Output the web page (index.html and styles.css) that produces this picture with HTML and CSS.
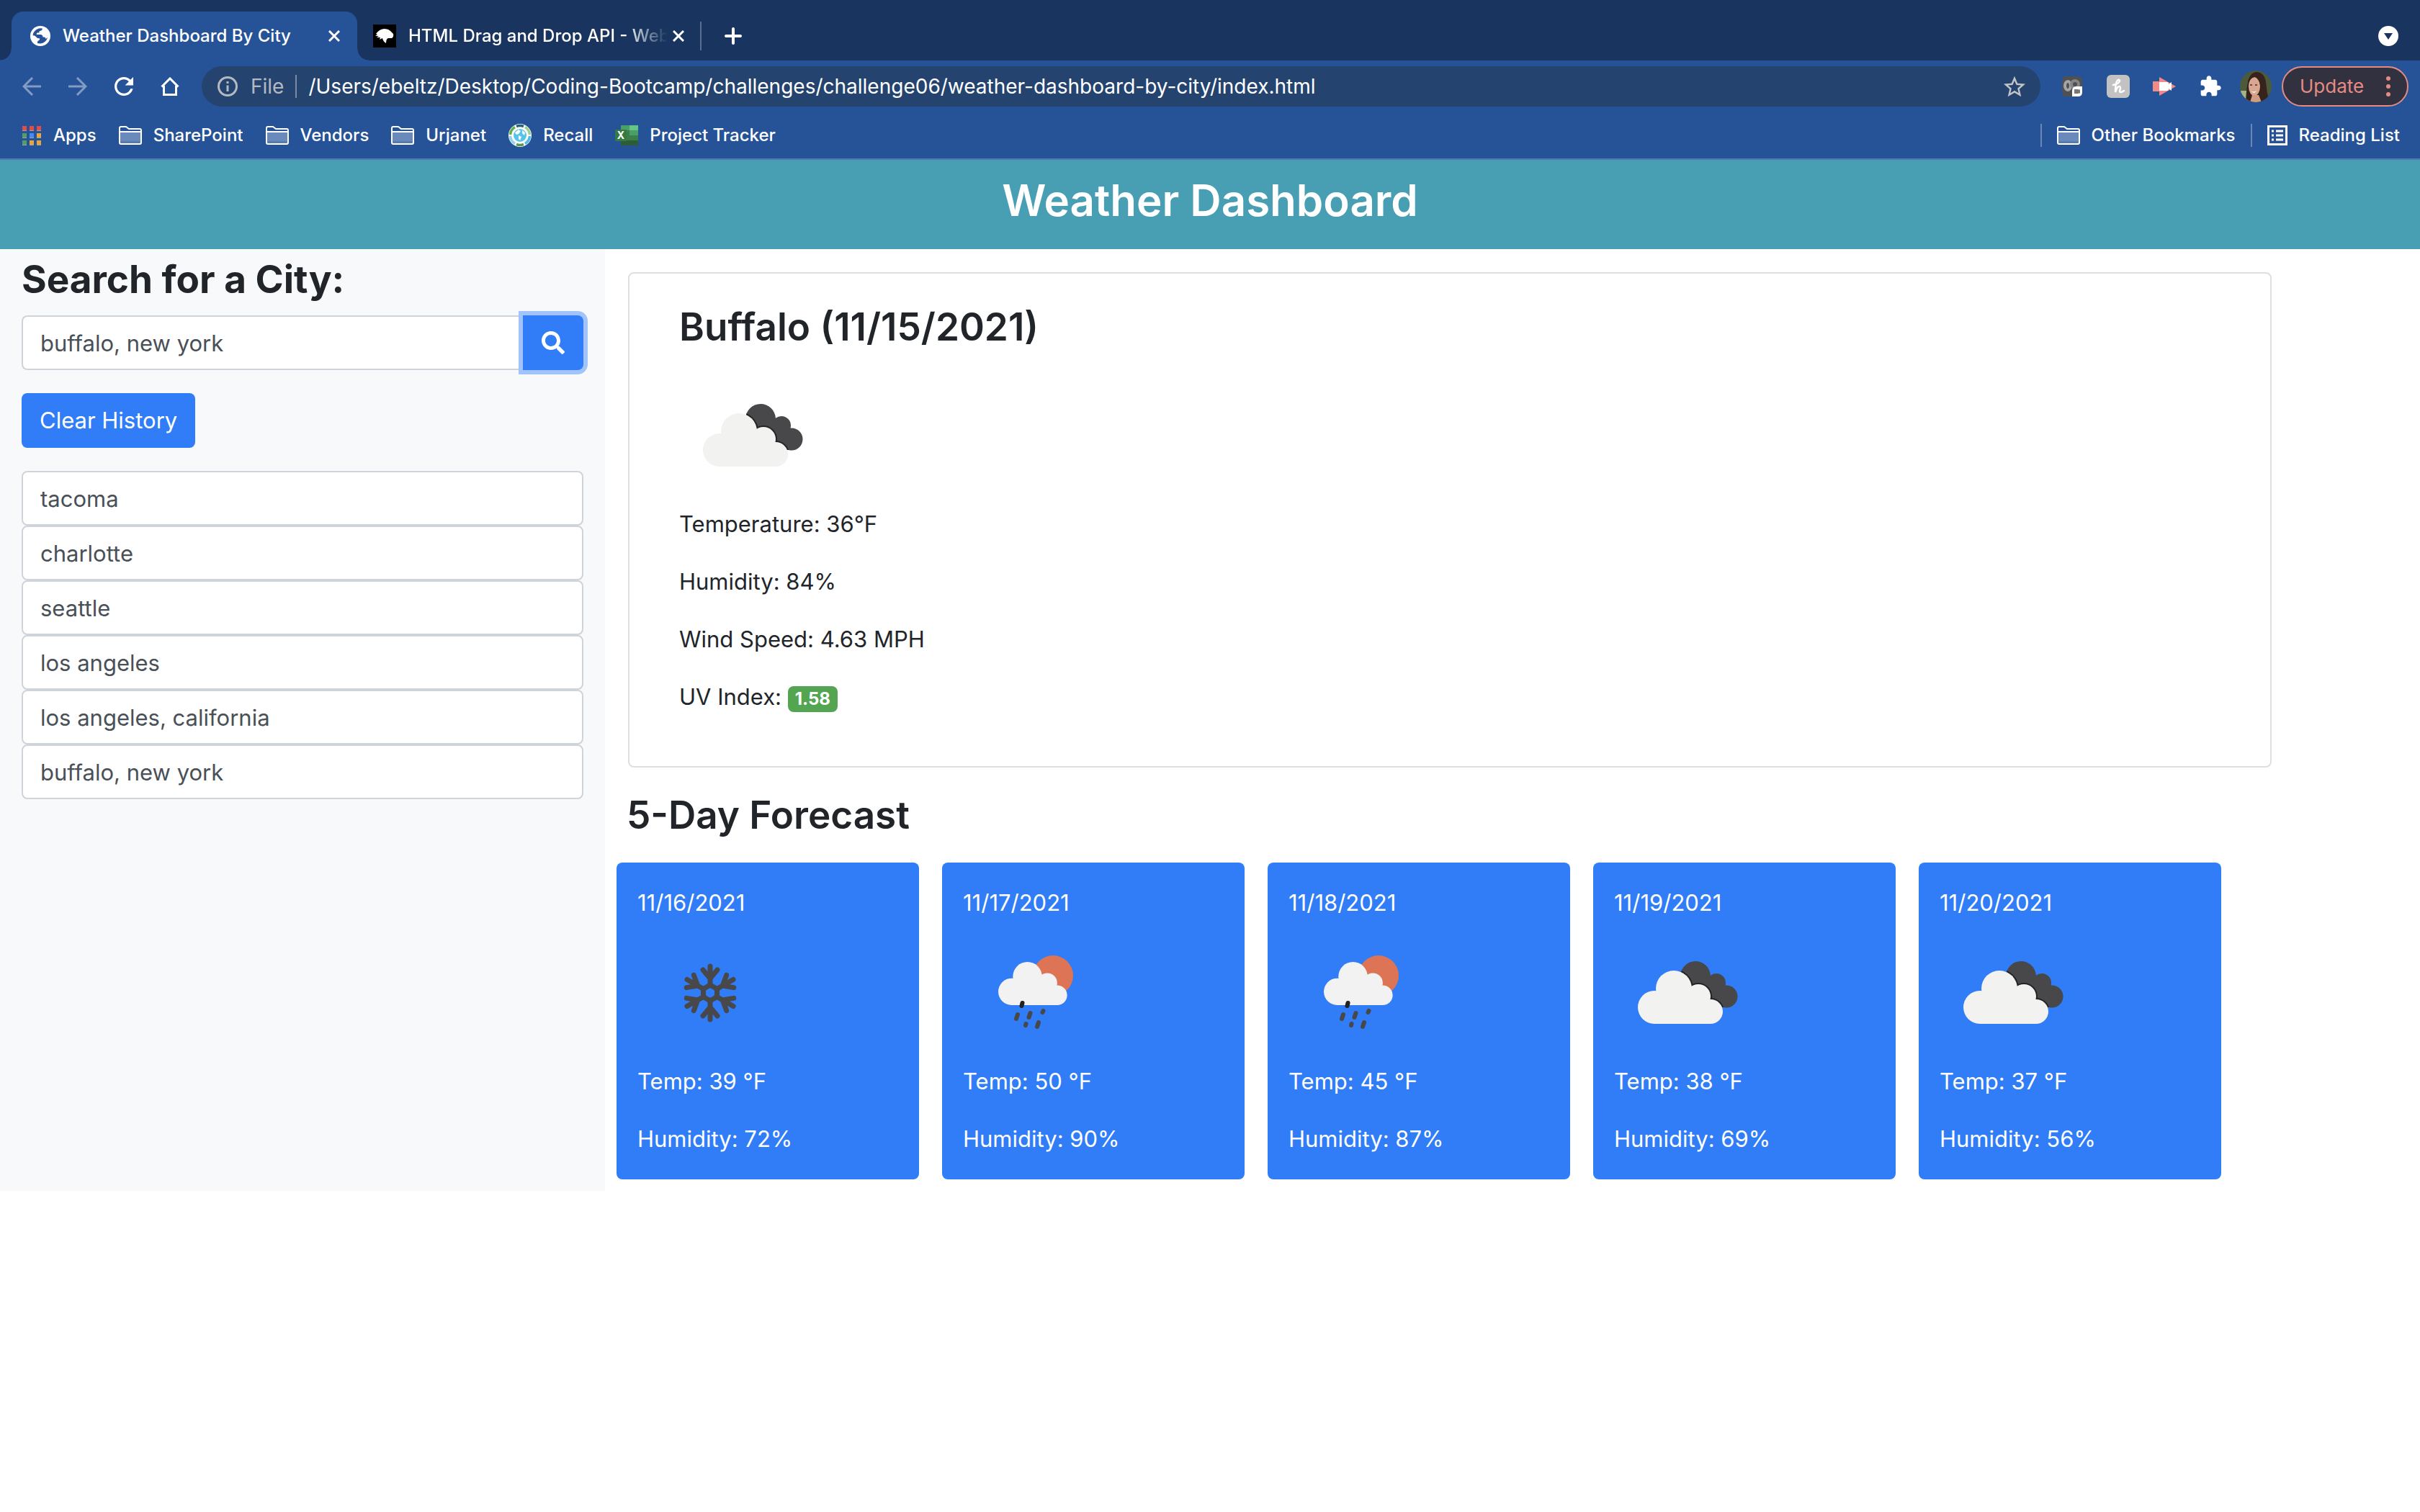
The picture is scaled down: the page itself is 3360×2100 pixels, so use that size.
FILE: index.html
```html
<!DOCTYPE html>
<html lang="en">
<head>
<meta charset="utf-8">
<title>Weather Dashboard By City</title>
<link rel="stylesheet" href="styles.css">
</head>
<body>
<svg class="defs" aria-hidden="true">
  <defs>
    <g id="cloud-shape">
      <circle cx="84" cy="95" r="25"/><circle cx="57" cy="121" r="23"/><circle cx="118" cy="106" r="17"/><circle cx="135" cy="127" r="17"/>
      <path d="M57 144V105L84 95L118 106L135 127V144Z"/>
    </g>
    <clipPath id="back-clip">
      <circle cx="114" cy="78" r="21"/><circle cx="143" cy="87" r="13"/><circle cx="157" cy="106" r="15.500"/>
      <path d="M96 90L114 78L143 80L157 95L160 121H110Z"/>
    </clipPath>
    <symbol id="clouds" viewBox="1 0 200 200">
      <g clip-path="url(#back-clip)">
        <rect width="200" height="200" fill="#48484a"/>
        <use href="#cloud-shape" fill="#242425" stroke="#242425" stroke-width="4"/>
      </g>
      <use href="#cloud-shape" fill="#f2f2f1"/>
    </symbol>
    <symbol id="sun-rain" viewBox="1 -1 200 200">
      <circle cx="126" cy="76" r="28" fill="#dc7455"/>
      <use href="#cloud-shape" fill="#f2f2f2" transform="translate(22.500 .3) scale(.81)"/>
      <g stroke="#48484a" stroke-width="6" stroke-linecap="round">
        <path d="M83.500 114l-1 4" stroke="#222"/><path d="M77 130l-2 6M94.500 128l-2 6M112.500 125l-1 2M88.500 143l-.5 2M106 141l-2 6"/>
      </g>
    </symbol>
    <g id="flake-arm"><path d="M0-10V-37M-10-32L0-20L10-32"/></g>
    <symbol id="snow" viewBox="1 -1 200 200">
      <g transform="translate(102 100)" fill="none" stroke="#48484a" stroke-width="7" stroke-linecap="round" stroke-linejoin="round">
        <path d="M0-11L9.500-5.500V5.500L0 11L-9.500 5.500V-5.500Z"/>
        <use href="#flake-arm"/><use href="#flake-arm" transform="rotate(60)"/><use href="#flake-arm" transform="rotate(120)"/>
        <use href="#flake-arm" transform="rotate(180)"/><use href="#flake-arm" transform="rotate(240)"/><use href="#flake-arm" transform="rotate(300)"/>
      </g>
    </symbol>
    <symbol id="folder" viewBox="0 0 32 26">
      <path d="M2 9H30V24H2Z" fill="#6a8abb"/><path d="M2 21H30V24H2Z" fill="#587aae"/>
      <path d="M1 3Q1 1 3 1H10L14 4H29Q31 4 31 6V23Q31 25 29 25H3Q1 25 1 23ZM1 8H31" fill="none" stroke="#fff" stroke-width="2"/>
    </symbol>
    <symbol id="cross" viewBox="0 0 16 16"><path d="M1 1L15 15M15 1L1 15" stroke="#fff" stroke-width="3"/></symbol>
  </defs>
</svg>

<div class="browser">
  <div class="tab-strip">
    <div class="tab tab-active">
      <svg class="icon-28" viewBox="0 0 28 28"><circle cx="14" cy="14" r="14" fill="#fff"/><path d="M3.500 13Q4.500 6 12 3.500Q17 3 17 4Q16 7 13 7Q12 8 12.500 9.500H9.500L8.500 12H14Q17.500 12 17.500 15.500H19.500Q21.500 15.500 21.500 18L24 16Q23 21 18 23.500Q14 25 10 24Q9.500 21 12 20Q14 19 12.500 17Q10 18 8.500 15.500Q7 13 3.500 13Z" fill="#265397"/></svg>
      <span class="tab-title">Weather Dashboard By City</span>
      <button class="plain" type="button" aria-label="Close tab"><svg class="icon-16"><use href="#cross"/></svg></button>
    </div>
    <div class="tab tab-idle">
      <svg class="icon-32" viewBox="0 0 32 32"><path d="M0 0H32V32H0Z" fill="#000"/><path d="M4 13Q8 7 15 6Q21 6 24 9L28 13Q29 17 26 19L21 19Q18 20 18 26Q14 24 13 19L9 21L10 18L5 18L8 16L3 16L6 14L4 13Z" fill="#fff"/></svg>
      <span class="tab-title tab-fade">HTML Drag and Drop API - Web</span>
      <button class="plain" type="button" aria-label="Close tab"><svg class="icon-16"><use href="#cross"/></svg></button>
    </div>
    <span class="tab-divider"></span>
    <button class="plain" type="button" aria-label="New tab"><svg class="icon-24" viewBox="0 0 24 24"><path d="M12 2V22M2 12H22" stroke="#fff" stroke-width="4" stroke-linecap="round"/></svg></button>
    <button class="plain push" type="button" aria-label="Search tabs"><svg class="icon-28" viewBox="0 0 28 28"><circle cx="14" cy="14" r="14" fill="#fff"/><path d="M8 10H20L14 19Z" fill="#19355f"/></svg></button>
  </div>

  <div class="toolbar">
    <div class="nav-buttons">
      <button class="plain" type="button" aria-label="Back"><svg class="icon-26" viewBox="0 0 26 26"><path d="M26 13H2M14 1L2 13L14 25" fill="none" stroke="#839cc4" stroke-width="3"/></svg></button>
      <button class="plain" type="button" aria-label="Forward"><svg class="icon-26" viewBox="0 0 26 26"><path d="M0 13H24M12 1L24 13L12 25" fill="none" stroke="#839cc4" stroke-width="3"/></svg></button>
      <button class="plain" type="button" aria-label="Reload"><svg class="icon-26" viewBox="4 4 16 16"><path fill="#fff" d="M17.650 6.350C16.200 4.900 14.210 4 12 4c-4.420 0-7.990 3.580-7.990 8s3.570 8 7.990 8c3.730 0 6.840-2.550 7.730-6h-2.080c-.82 2.330-3.040 4-5.650 4-3.310 0-6-2.690-6-6s2.690-6 6-6c1.660 0 3.140.69 4.220 1.780L13 11h7V4l-2.350 2.350z"/></svg></button>
      <button class="plain" type="button" aria-label="Home"><svg class="icon-26" viewBox="0 0 26 26"><path d="M1.500 13.500L13 2L24.500 13.500M4.500 12V24.500H21.500V12" fill="none" stroke="#fff" stroke-width="3"/></svg></button>
    </div>
    <div class="omnibox">
      <svg class="icon-28" viewBox="0 0 28 28"><circle cx="14" cy="14" r="12.500" fill="none" stroke="#b4b9c2" stroke-width="3"/><path d="M14 7V10M14 12.500V21" stroke="#b4b9c2" stroke-width="3"/></svg>
      <label class="scheme" for="address">File</label>
      <input class="address" id="address" type="text" value="/Users/ebeltz/Desktop/Coding-Bootcamp/challenges/challenge06/weather-dashboard-by-city/index.html">
      <button class="plain" type="button" aria-label="Bookmark this tab"><svg class="icon-30" viewBox="2 1.500 20 20"><path fill="#c3c4c6" d="M22 9.240l-7.190-.62L12 2 9.190 8.630 2 9.240l5.460 4.730L5.820 21 12 17.270 18.180 21l-1.630-7.030L22 9.240zM12 15.400l-3.760 2.270 1-4.280-3.320-2.880 4.380-.38L12 6.100l1.710 4.040 4.380.38-3.320 2.880 1 4.280L12 15.400z"/></svg></button>
    </div>
    <div class="extensions">
      <button class="plain" type="button" aria-label="Screen capture"><svg class="icon-32" viewBox="0 0 32 32"><rect x="2" y="2" width="28" height="28" rx="6" fill="#505052"/><ellipse cx="10" cy="15" rx="4" ry="6" fill="none" stroke="#a5a5a7" stroke-width="4"/><ellipse cx="20" cy="13" rx="5" ry="5" fill="none" stroke="#858587" stroke-width="4"/><path d="M16 22Q16 16 22 16H30V24Q30 30 24 30H16Z" fill="#fff"/><path d="M19 20H25V21L27 20V26L25 25V26H19Z" fill="#77777a"/></svg></button>
      <button class="plain" type="button" aria-label="Coupons"><svg class="icon-32" viewBox="0 0 32 32"><rect width="32" height="32" rx="6" fill="#c2c2c3"/><path d="M9 14Q18 12 18 8Q17 5 14 9Q12 14 12 24Q15 15 18 16Q20 17 18 22Q18 26 24 22" fill="none" stroke="#fff" stroke-width="2.500" stroke-linecap="round"/></svg></button>
      <button class="plain" type="button" aria-label="Video recorder"><svg class="icon-32" viewBox="0 0 32 32"><path d="M0 9H9V3L32 16L9 29V23H0Z" fill="#f28b87"/><path d="M9 10H20Q22 10 22 13L26 10V22L22 19Q22 22 20 22H9Z" fill="#fff"/></svg></button>
      <button class="plain" type="button" aria-label="Extensions"><svg class="icon-32" viewBox="0 0 24 24"><path fill="#fff" d="M20.500 11H19V7c0-1.100-.9-2-2-2h-4V3.500C13 2.120 11.880 1 10.500 1S8 2.120 8 3.500V5H4c-1.100 0-1.990.9-1.990 2v3.800H3.500c1.490 0 2.700 1.210 2.700 2.700s-1.210 2.700-2.700 2.700H2V20c0 1.100.9 2 2 2h3.800v-1.500c0-1.490 1.210-2.700 2.700-2.700 1.490 0 2.700 1.210 2.700 2.700V22H17c1.100 0 2-.9 2-2v-4h1.500c1.380 0 2.500-1.120 2.500-2.500S21.880 11 20.500 11z"/></svg></button>
    </div>
    <button class="plain avatar" type="button" aria-label="Profile"><svg class="icon-44" viewBox="0 0 44 44"><clipPath id="face-clip"><circle cx="22" cy="22" r="22"/></clipPath><g clip-path="url(#face-clip)"><path d="M0 0H44V44H0Z" fill="#4d5a39"/><path d="M0 28H14V44H0Z" fill="#a3b583"/><path d="M8 44Q9 22 12 12Q16 1 24 2Q34 3 36 16Q37 30 41 44Z" fill="#38221c"/><ellipse cx="20" cy="22" rx="8" ry="13" fill="#d9a78f"/><path d="M17 34H26L30 44H14Z" fill="#cf9c84"/><path d="M11 24Q12 10 21 9Q28 12 29 26Q32 14 26 6Q16 3 11 14Z" fill="#38221c"/><path d="M15 28Q19 31 23 28Q20 34 15 28Z" fill="#fff"/><path d="M14 20H17M21 20H24" stroke="#4a2c22" stroke-width="1.500"/></g></svg></button>
    <button class="update" type="button">Update <svg class="dots" viewBox="0 0 6 28"><g fill="#e58b83"><circle cx="3" cy="3" r="3"/><circle cx="3" cy="14" r="3"/><circle cx="3" cy="25" r="3"/></g></svg></button>
  </div>

  <nav class="bookmarks" aria-label="Bookmarks">
    <a class="bookmark" href="#apps"><svg class="icon-28" viewBox="0 0 28 28"><g fill="#c9c4cc"><path d="M1 6H7V8H1ZM11 6H17V8H11ZM21 6H27V8H21ZM1 16H7V18H1ZM11 16H17V18H11ZM21 16H27V18H21ZM1 26H7V28H1ZM11 26H17V28H11ZM21 26H27V28H21Z" opacity=".7"/></g><path d="M1 1H7V7H1ZM11 1H17V7H11ZM21 1H27V7H21Z" fill="#e94b40"/><path d="M1 11H7V17H1ZM1 21H7V27H1Z" fill="#539f5b"/><path d="M11 11H17V17H11Z" fill="#448bf5"/><path d="M21 11H27V17H21ZM11 21H17V27H11ZM21 21H27V27H21Z" fill="#eaa634"/></svg>Apps</a>
    <a class="bookmark" href="#sharepoint"><svg class="folder"><use href="#folder"/></svg>SharePoint</a>
    <a class="bookmark" href="#vendors"><svg class="folder"><use href="#folder"/></svg>Vendors</a>
    <a class="bookmark" href="#urjanet"><svg class="folder"><use href="#folder"/></svg>Urjanet</a>
    <a class="bookmark" href="#recall"><svg class="icon-32" viewBox="0 0 32 32"><circle cx="16" cy="16" r="16" fill="#fff"/><g fill="none" stroke-width="3.500"><path d="M11 3.500A13.500 13.500 0 0 1 21 3.500" stroke="#25647f"/><path d="M23 4.500A13.500 13.500 0 0 1 29.500 15" stroke="#a0cf8d"/><path d="M29.500 17A13.500 13.500 0 0 1 23 27.500" stroke="#4fb9e8"/><path d="M21 28.500A13.500 13.500 0 0 1 11 28.500" stroke="#5a9650"/><path d="M9 27.500A13.500 13.500 0 0 1 2.500 17" stroke="#8fd3ef"/><path d="M2.500 15A13.500 13.500 0 0 1 9 4.500" stroke="#62b04c"/></g><circle cx="16" cy="16" r="9" fill="#58c4ea"/><path d="M9 12L14 8L17 10L14 14L11 15ZM14 16L18 18L16 23L14 21ZM19 9L23 12L22 16L19 13Z" fill="#fff"/></svg>Recall</a>
    <a class="bookmark" href="#project-tracker"><svg class="icon-32" viewBox="0 0 32 32"><path d="M8 2H20V9H8ZM20 9H32V16H20Z" fill="#4a9f68"/><path d="M20 2H32V9H20Z" fill="#63c389"/><path d="M8 9H20V23H8ZM20 16H32V23H20Z" fill="#3a7f49"/><path d="M8 23H32V30H8Z" fill="#2e5c38"/><rect y="8" width="16" height="16" rx="1" fill="#347a42"/><text class="sheet-mark" x="8" y="21" text-anchor="middle">X</text></svg>Project Tracker</a>
    <span class="bar-divider push"></span>
    <a class="bookmark" href="#other"><svg class="folder"><use href="#folder"/></svg>Other Bookmarks</a>
    <span class="bar-divider"></span>
    <a class="bookmark" href="#reading"><svg class="icon-28" viewBox="0 0 28 28"><path d="M1.500 1.500H26.500V26.500H1.500Z" fill="none" stroke="#fff" stroke-width="3"/><path d="M6 8H9M12 8H22M6 14H9M12 14H22M6 20H9M12 20H22" stroke="#fff" stroke-width="3"/></svg>Reading List</a>
  </nav>
</div>

<header class="banner"><h1>Weather Dashboard</h1></header>

<div class="layout">
  <aside class="sidebar">
    <form class="search-form" onsubmit="return false">
      <label class="search-label" for="city">Search for a City:</label>
      <div class="search-row">
        <input class="field city-field" id="city" type="text" value="buffalo, new york">
        <button class="search-button" type="submit" aria-label="Search"><svg class="icon-32" viewBox="0 0 512 512"><path fill="#fff" d="M505 442.700L405.300 343c-4.500-4.500-10.600-7-17-7H372c27.600-35.300 44-79.700 44-128C416 93.100 322.900 0 208 0S0 93.100 0 208s93.100 208 208 208c48.300 0 92.700-16.400 128-44v16.300c0 6.400 2.500 12.500 7 17l99.700 99.700c9.400 9.400 24.600 9.400 33.900 0l28.300-28.300c9.400-9.400 9.400-24.600.1-34zM208 336c-70.700 0-128-57.200-128-128 0-70.700 57.200-128 128-128 70.700 0 128 57.200 128 128 0 70.700-57.200 128-128 128z"/></svg></button>
      </div>
      <button class="clear-button" type="button">Clear History</button>
    </form>
    <div class="history">
      <input class="field" type="text" readonly aria-label="Recent city 1" value="tacoma">
      <input class="field" type="text" readonly aria-label="Recent city 2" value="charlotte">
      <input class="field" type="text" readonly aria-label="Recent city 3" value="seattle">
      <input class="field" type="text" readonly aria-label="Recent city 4" value="los angeles">
      <input class="field" type="text" readonly aria-label="Recent city 5" value="los angeles, california">
      <input class="field" type="text" readonly aria-label="Recent city 6" value="buffalo, new york">
    </div>
  </aside>

  <main class="main">
    <section class="current">
      <h2>Buffalo (11/15/2021)</h2>
      <svg class="weather-icon" role="img" aria-label="Broken clouds"><use href="#clouds"/></svg>
      <div class="readings">
        <p>Temperature: 36°F</p>
        <p>Humidity: 84%</p>
        <p>Wind Speed: 4.63 MPH</p>
        <p>UV Index: <span class="badge">1.58</span></p>
      </div>
    </section>
    <h2 class="forecast-title">5-Day Forecast</h2>
    <section class="forecast">
      <article class="day">
        <h3>11/16/2021</h3>
        <svg class="weather-icon" role="img" aria-label="Snow"><use href="#snow"/></svg>
        <div class="readings"><p>Temp: 39 °F</p><p>Humidity: 72%</p></div>
      </article>
      <article class="day">
        <h3>11/17/2021</h3>
        <svg class="weather-icon" role="img" aria-label="Rain"><use href="#sun-rain"/></svg>
        <div class="readings"><p>Temp: 50 °F</p><p>Humidity: 90%</p></div>
      </article>
      <article class="day">
        <h3>11/18/2021</h3>
        <svg class="weather-icon" role="img" aria-label="Rain"><use href="#sun-rain"/></svg>
        <div class="readings"><p>Temp: 45 °F</p><p>Humidity: 87%</p></div>
      </article>
      <article class="day">
        <h3>11/19/2021</h3>
        <svg class="weather-icon" role="img" aria-label="Broken clouds"><use href="#clouds"/></svg>
        <div class="readings"><p>Temp: 38 °F</p><p>Humidity: 69%</p></div>
      </article>
      <article class="day">
        <h3>11/20/2021</h3>
        <svg class="weather-icon" role="img" aria-label="Broken clouds"><use href="#clouds"/></svg>
        <div class="readings"><p>Temp: 37 °F</p><p>Humidity: 56%</p></div>
      </article>
    </section>
  </main>
</div>
</body>
</html>
```
FILE: styles.css
```css
* { box-sizing: border-box; }

body {
  margin: 0;
  background: #fff;
  color: #212529;
  font: 400 31px/48px Inter, "Liberation Sans", sans-serif;
}

h1, h2, h3, p { margin: 0; }
button, input { font: inherit; }
svg { display: block; flex: none; }

.defs { position: absolute; width: 0; height: 0; }
.icon-16 { width: 16px; height: 16px; }
.icon-24 { width: 24px; height: 24px; }
.icon-26 { width: 26px; height: 26px; }
.icon-28 { width: 28px; height: 28px; }
.icon-30 { width: 30px; height: 30px; }
.icon-32 { width: 32px; height: 32px; }
.icon-44 { width: 44px; height: 44px; }

.plain {
  display: block;
  padding: 0;
  border: 0;
  background: none;
}
.plain.push { margin-left: auto; }

/* Browser window */
.browser {
  background: #265397;
  border-bottom: 2px solid #5177b0;
  color: #fff;
  font-size: 24px;
  font-weight: 500;
  line-height: 32px;
}

.tab-strip {
  display: flex;
  align-items: center;
  height: 84px;
  padding: 16px 30px 0 16px;
  background: #19355f;
}

.tab { display: flex; align-items: center; }

.tab-active {
  position: relative;
  width: 480px;
  height: 68px;
  padding: 0 24px 0 26px;
  border-radius: 16px 16px 0 0;
  background: #265397;
}
.tab-active::before,
.tab-active::after {
  content: "";
  position: absolute;
  bottom: 0;
  width: 16px;
  height: 16px;
}
.tab-active::before { left: -16px; background: radial-gradient(circle at 0 0, #19355f 15px, #265397 16px); }
.tab-active::after { right: -16px; background: radial-gradient(circle at 100% 0, #19355f 15px, #265397 16px); }

.tab-idle {
  width: 476px;
  padding: 0 22px;
}
.tab-title {
  flex: 1;
  min-width: 0;
  margin-left: 17px;
  white-space: nowrap;
}
.tab-fade {
  -webkit-mask-image: linear-gradient(to right, #000 82%, transparent 98%);
  mask-image: linear-gradient(to right, #000 82%, transparent 98%);
}
.tab-divider {
  width: 2px;
  height: 40px;
  margin-right: 32px;
  background: #5a6f8f;
}

.toolbar {
  display: flex;
  align-items: center;
  padding: 8px 16px 8px 31px;
}
.nav-buttons { display: flex; gap: 38px; margin-right: 31px; }

.omnibox {
  display: flex;
  flex: 1;
  align-items: center;
  height: 56px;
  padding: 0 21px 0 22px;
  border-radius: 28px;
  background: #24446f;
  font-size: 28px;
  font-weight: 400;
}
.scheme {
  margin-left: 18px;
  padding-right: 16px;
  border-right: 2px solid #7c8ba3;
  color: #b4b9c2;
}
.address {
  flex: 1;
  height: 48px;
  padding: 0 16px;
  border: 0;
  background: none;
  color: #fff;
}

.extensions { display: flex; gap: 32px; margin: 0 25px 0 28px; }
.avatar { margin-right: 14px; }

.update {
  display: flex;
  align-items: center;
  justify-content: space-between;
  width: 176px;
  height: 56px;
  padding: 0 23px;
  border: 2px solid #e58b83;
  border-radius: 28px;
  background: #31313f;
  color: #e58b83;
  font-size: 26px;
  font-weight: 400;
}
.dots { width: 6px; height: 28px; }

.bookmarks {
  display: flex;
  align-items: center;
  gap: 31px;
  height: 64px;
  padding: 0 28px 0 30px;
}
.bookmark {
  display: flex;
  align-items: center;
  gap: 16px;
  color: #fff;
  text-decoration: none;
}
.folder { width: 32px; height: 26px; }
.bar-divider {
  width: 2px;
  height: 32px;
  margin: 0 -10px;
  background: #6a87b6;
}
.bar-divider.push { margin-left: auto; }
.sheet-mark { fill: #fff; font: 700 14px Inter, sans-serif; }

/* Page */
.banner {
  padding: 16px 0 28px;
  background: #489fb4;
  color: #fff;
  text-align: center;
}
.banner h1 { font-size: 60px; font-weight: 600; line-height: 80px; }

.layout { display: flex; }

.sidebar {
  width: 25%;
  padding: 8px 30px;
  background: #f8f9fb;
}
.search-label {
  display: block;
  margin-bottom: 16px;
  font-size: 53px;
  font-weight: 700;
  line-height: 68px;
}
.search-row { display: flex; margin-bottom: 32px; }

.field {
  display: block;
  width: 100%;
  height: 76px;
  padding: 0 24px;
  border: 2px solid #ced4da;
  border-radius: 8px;
  background: #fff;
  color: #495057;
}
.city-field {
  flex: 1;
  min-width: 0;
  border-right: 0;
  border-radius: 8px 0 0 8px;
}
.search-button {
  padding: 22px 26px;
  border: 0;
  border-radius: 0 8px 8px 0;
  background: #307df7;
  box-shadow: 0 0 0 6px #a0c4fb;
}
.clear-button {
  height: 76px;
  margin-bottom: 32px;
  padding: 0 25px;
  border: 0;
  border-radius: 8px;
  background: #307df7;
  color: #fff;
}

.main {
  flex: 1;
  padding: 32px 0 16px;
}
.main h2 { font-size: 53px; font-weight: 600; line-height: 68px; }

.current {
  margin: 0 206px 0 32px;
  padding: 40px 69px;
  border: 2px solid #dfdfdf;
  border-radius: 8px;
}
.current h2 { margin-bottom: 16px; }
.weather-icon { width: 200px; height: 200px; }
.readings p { margin-bottom: 32px; }

.badge {
  display: inline-block;
  padding: 6px 10px;
  border-radius: 8px;
  background: #53a551;
  color: #fff;
  font-size: 24px;
  font-weight: 700;
  line-height: 24px;
}

.main .forecast-title { margin: 32px 30px; }
.forecast {
  display: grid;
  grid-template-columns: repeat(5, 1fr);
  gap: 32px;
  margin: 0 276px 0 16px;
}
.day {
  padding: 32px 29px 0;
  border-radius: 8px;
  background: #307df7;
  color: #fff;
}
.day h3 { font-size: 31px; font-weight: 400; line-height: 48px; }
```
